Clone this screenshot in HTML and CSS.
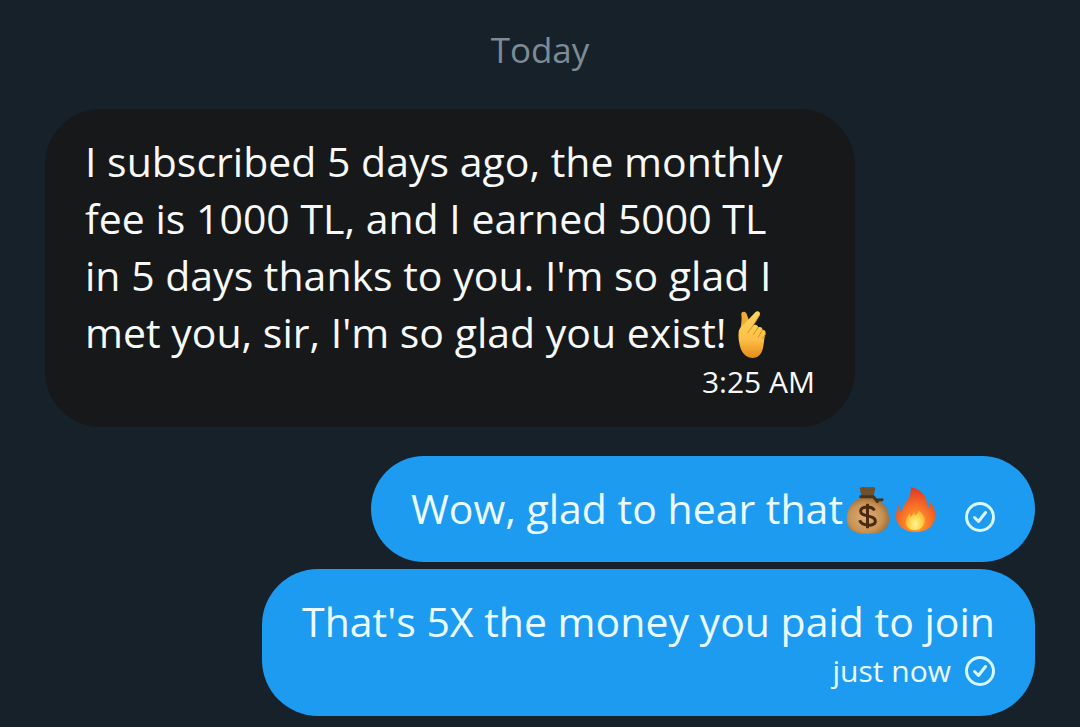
FILE: index.html
```html
<!DOCTYPE html>
<html lang="en">
<head>
<meta charset="utf-8">
<meta name="viewport" content="width=device-width, initial-scale=1">
<title>Messages</title>
<link rel="stylesheet" href="styles.css">
</head>
<body>
<main class="chat">
  <h1 class="day">Today</h1>
  <article class="bubble received">
    <p class="text">I subscribed 5 days ago, the monthly<br>fee is 1000 TL, and I earned 5000 TL<br>in 5 days thanks to you. I'm so glad I<br>met you, sir, I'm so glad you exist!
      <svg class="emoji" viewBox="48 24 150 150" role="img" aria-label="Hand with index finger and thumb crossed">
        <defs><linearGradient id="skin" x1="0" y1="0" x2="0" y2="1"><stop offset="0" stop-color="#ffd65a"/><stop offset=".6" stop-color="#fcc047"/><stop offset="1" stop-color="#e68a18"/></linearGradient></defs>
        <path d="M61 36c1-8 12-9 16-1l9 24-14 30-13-4c1-18 5-30 2-49z" fill="#f0ac33"/>
        <path d="M54 86c4-10 12-16 20-23l30-32c8-7 18 0 13 9L98 71c7-4 14 0 15 6 8-3 13 2 13 8 8-1 11 6 9 13-4 10-4 25-7 40-4 22-16 33-32 33-20 0-34-17-39-37-4-17-6-32-3-48z" fill="url(#skin)"/>
        <path d="M117 40L98 71 81 93M113 77L98 99M126 85l-13 22M135 98l-9 14" fill="none" stroke="#d98a20" stroke-width="3" stroke-linecap="round"/>
      </svg></p>
    <footer class="meta"><time>3:25 AM</time></footer>
  </article>

  <article class="bubble sent inline">
    <p class="text">Wow, glad to hear that<svg class="emoji" viewBox="0 0 50 50" role="img" aria-label="Money bag">
        <defs><radialGradient id="bag" cx=".45" cy=".55" r=".6"><stop offset="0" stop-color="#dcae78"/><stop offset=".65" stop-color="#c99355"/><stop offset="1" stop-color="#9a6532"/></radialGradient></defs>
        <path d="M18 12C10 15 3 24 4 35c1 10 7 14 21 14s21-4 22-14c1-11-7-20-15-23z" fill="url(#bag)"/>
        <path d="M17 2c3-2 5 0 8-1 3 1 5-1 8 1l-2 9H19z" fill="#70502b"/>
        <path d="M18 11h13c3 5 6 3 9 3M31 11l4 5" fill="none" stroke="#46351d" stroke-width="3" stroke-linecap="round"/>
        <path d="M32 25c-2-5-14-5-14 1 0 6 15 3 15 10 0 6-14 5-16-1M25 18v25" fill="none" stroke="#4b2a12" stroke-width="3"/>
      </svg><svg class="emoji" viewBox="1 0 50 50" role="img" aria-label="Fire">
        <defs><radialGradient id="flame" cx=".5" cy=".8" r=".75"><stop offset="0" stop-color="#ffb02c"/><stop offset=".45" stop-color="#fa7726"/><stop offset="1" stop-color="#df3c27"/></radialGradient><radialGradient id="core" cx=".5" cy=".8" r=".7"><stop offset="0" stop-color="#fff4a0"/><stop offset=".4" stop-color="#ffd84a"/><stop offset="1" stop-color="#ff8e2c"/></radialGradient></defs>
        <path d="M20 1c11 2 18 10 17 22 2-1 3-4 3-7 4 5 6 11 5 17-2 9-9 14-20 14S6 41 5 32c0-5 1-9 3-13 0 4 1 7 3 8 0-9 11-14 9-26z" fill="url(#flame)"/>
        <path d="M26 15c1 7-3 10-2 15 3-1 4-3 4-5 5 4 8 8 6 13-2 5-5 7-10 7s-9-3-9-8c0-4 2-6 4-9l1 4c4-4 6-9 6-17z" fill="url(#core)"/>
      </svg></p>
    <svg class="check" viewBox="0 0 30 30" role="img" aria-label="Sent"><circle cx="15" cy="15" r="13.5"/><path d="M9.5 15.5l4 4 7-9"/></svg>
  </article>

  <article class="bubble sent">
    <p class="text">That's 5X the money you paid to join</p>
    <footer class="meta"><time>just now</time><svg class="check" viewBox="0 0 30 30" role="img" aria-label="Sent"><circle cx="15" cy="15" r="13.5"/><path d="M9.5 15.5l4 4 7-9"/></svg></footer>
  </article>
</main>
</body>
</html>
```
FILE: styles.css
```css
* { box-sizing: border-box; }
body {
  margin: 0;
  background: #17212a;
  color: #f7f9f9;
  font-family: "Open Sans", "Noto Sans", sans-serif;
}
.chat {
  display: flex;
  flex-direction: column;
  align-items: flex-end;
  gap: 7px;
  padding: 25px 45px 10px;
}
.day {
  align-self: center;
  margin: 0 0 28px;
  color: #7c8b96;
  font-size: 35px;
  font-weight: 400;
  line-height: 49px;
}
.bubble {
  max-width: 100%;
  padding: 24px 40px 25px;
  border-radius: 56px;
}
.received {
  align-self: flex-start;
  width: 810px;
  margin-bottom: 22px;
  background: #16181a;
}
.sent {
  background: #1d9bf0;
  color: #ecfbff;
}
.inline {
  display: flex;
  align-items: center;
  gap: 24px;
}
.inline .check { margin-top: 17px; }
.text {
  margin: 0;
  font-size: 41px;
  line-height: 57px;
  white-space: nowrap;
}
.emoji {
  width: 49px;
  height: 49px;
  vertical-align: -11px;
}
.meta {
  display: flex;
  justify-content: flex-end;
  align-items: center;
  gap: 14px;
  font-size: 30px;
  line-height: 41px;
}
.check {
  flex: none;
  width: 30px;
  height: 30px;
  fill: none;
  stroke: #d9f7ff;
  stroke-width: 3;
  stroke-linecap: round;
  stroke-linejoin: round;
}
```
